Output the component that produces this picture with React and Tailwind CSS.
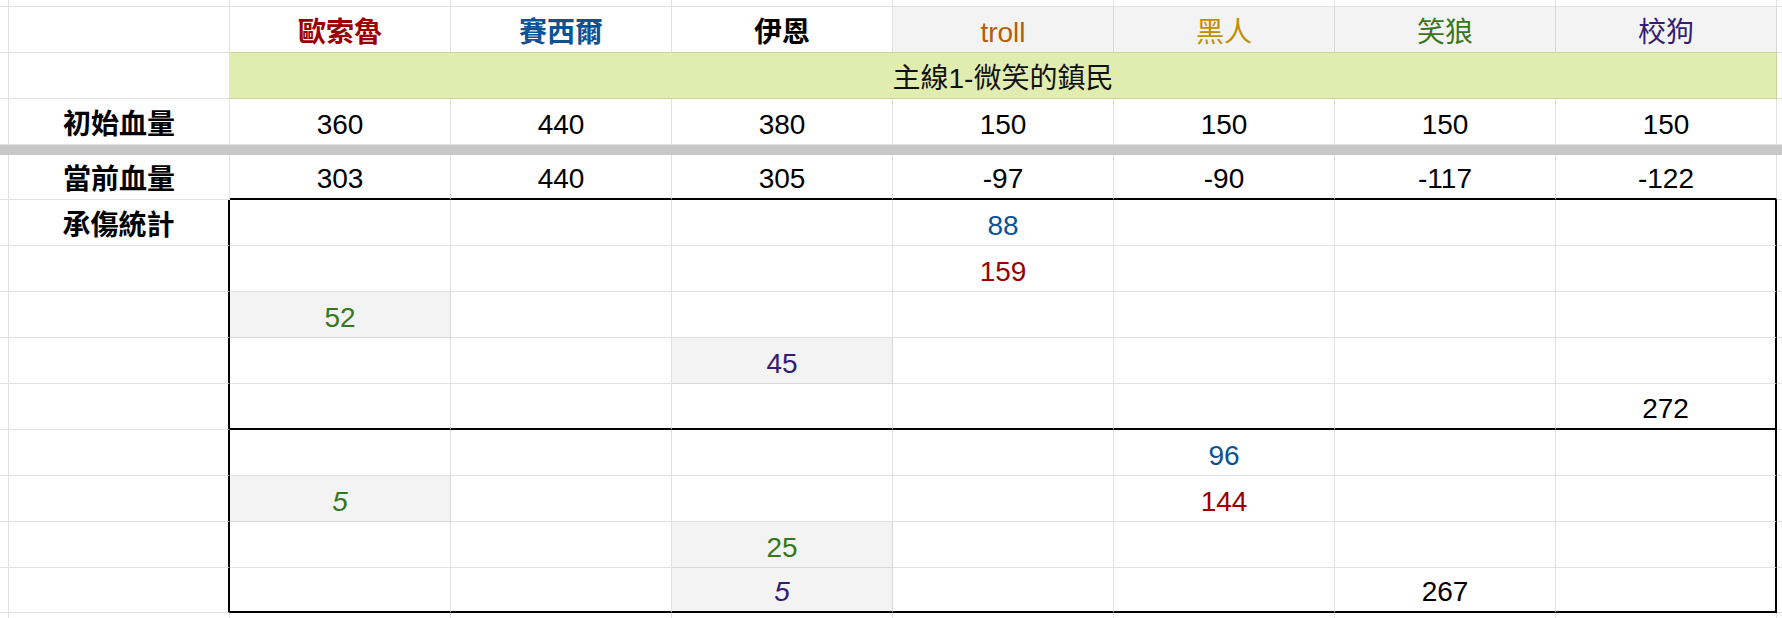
import React from "react";
import { twMerge } from "tailwind-merge";

const FONT = "font-['Liberation_Sans','Noto_Sans_CJK_TC',sans-serif]";

const header = [
  { t: "歐索魯", cls: "font-bold text-[#990000]" },
  { t: "賽西爾", cls: "font-bold text-[#0b5394]" },
  { t: "伊恩", cls: "font-bold text-black" },
  { t: "troll", cls: "text-[#b45f06] bg-[#f3f3f3] border-r-[#d9d9d9]" },
  { t: "黑人", cls: "text-[#bf9000] bg-[#f3f3f3] border-r-[#d9d9d9]" },
  { t: "笑狼", cls: "text-[#38761d] bg-[#f3f3f3] border-r-[#d9d9d9]" },
  { t: "校狗", cls: "text-[#351c75] bg-[#f3f3f3] border-r-[#d9d9d9]" },
];

const startHp = [360, 440, 380, 150, 150, 150, 150];
const currentHp = [303, 440, 305, -97, -90, -117, -122];

const blue = "text-[#0b5394]";
const red = "text-[#990000]";
const green = "text-[#38761d]";
const purple = "text-[#351c75]";
const shaded = "bg-[#f3f3f3] border-r-[#d9d9d9] border-b-[#d9d9d9]";

// damage rows, one entry per character column
const damage = [
  [null, null, null, { t: 88, cls: blue }, null, null, null],
  [null, null, null, { t: 159, cls: red }, null, null, null],
  [{ t: 52, cls: `${green} ${shaded}` }, null, null, null, null, null, null],
  [null, null, { t: 45, cls: `${purple} ${shaded}` }, null, null, null, null],
  [null, null, null, null, null, null, { t: 272 }],
  [null, null, null, null, { t: 96, cls: blue }, null, null],
  [{ t: 5, cls: `${green} ${shaded} italic` }, null, null, null, { t: 144, cls: red }, null, null],
  [null, null, { t: 25, cls: `${green} ${shaded}` }, null, null, null, null],
  [null, null, { t: 5, cls: `${purple} ${shaded} italic` }, null, null, { t: 267 }, null],
];

const damageHeights = [
  "h-[46px]",
  "h-[46px]",
  "h-[46px]",
  "h-[46px]",
  "h-[46px]",
  "h-[46px]",
  "h-[46px]",
  "h-[46px]",
  "h-[45px]",
];

function Cell({ className, children }) {
  return (
    <div
      className={twMerge(
        "flex w-[221px] shrink-0 items-end justify-center border-r border-b border-[#e2e2e2] pb-[4px] text-[28px] leading-[31px] text-black",
        className
      )}
    >
      {children}
    </div>
  );
}

function Row({ height, children }) {
  return (
    <div className={twMerge("flex", height)}>
      <div className="w-[9px] shrink-0 border-r border-b border-[#e2e2e2]" />
      {children}
      <div className="flex-1 border-b border-[#e2e2e2]" />
    </div>
  );
}

export default function App() {
  return (
    <div className={`w-[1782px] h-[618px] overflow-hidden bg-white ${FONT}`}>
      <Row height="h-[7px]">
        {Array.from({ length: 8 }).map((_, i) => (
          <Cell key={i} />
        ))}
      </Row>

      <Row height="h-[46px]">
        <Cell />
        {header.map((h) => (
          <Cell key={h.t} className={`${h.cls} border-b-[#cdd59f]`}>
            {h.t}
          </Cell>
        ))}
      </Row>

      <Row height="h-[46px]">
        <Cell />
        <div className="flex w-[1547px] shrink-0 items-end justify-center border-r border-b border-[#c9d29b] bg-[#e1ecb1] pb-[4px] text-[28px] leading-[31px] text-[#111]">
          主線1-微笑的鎮民
        </div>
      </Row>

      <Row height="h-[46px]">
        <Cell className="font-bold">初始血量</Cell>
        {startHp.map((v, i) => (
          <Cell key={i}>{v}</Cell>
        ))}
      </Row>

      <div className="h-[10px] bg-[#c7c7c7]" />

      <Row height="h-[45px]">
        <Cell className="font-bold">當前血量</Cell>
        {currentHp.map((v, i) => (
          <Cell key={i} className="border-b-2 border-b-black">
            {v}
          </Cell>
        ))}
      </Row>

      {damage.map((row, r) => {
        const boxBottom = r === 4 || r === 8 ? "border-b-2 border-b-black" : "";
        return (
          <Row key={r} height={damageHeights[r]}>
            <Cell className="font-bold border-r-2 border-r-black">
              {r === 0 ? "承傷統計" : null}
            </Cell>
            {row.map((c, i) => (
              <Cell
                key={i}
                className={`${c ? c.cls || "" : ""} ${boxBottom} ${
                  i === 6 ? "border-r-2 border-r-black" : ""
                }`}
              >
                {c ? c.t : null}
              </Cell>
            ))}
          </Row>
        );
      })}

      <Row height="h-[10px]">
        {Array.from({ length: 8 }).map((_, i) => (
          <Cell key={i} className="border-b-0" />
        ))}
      </Row>
    </div>
  );
}
